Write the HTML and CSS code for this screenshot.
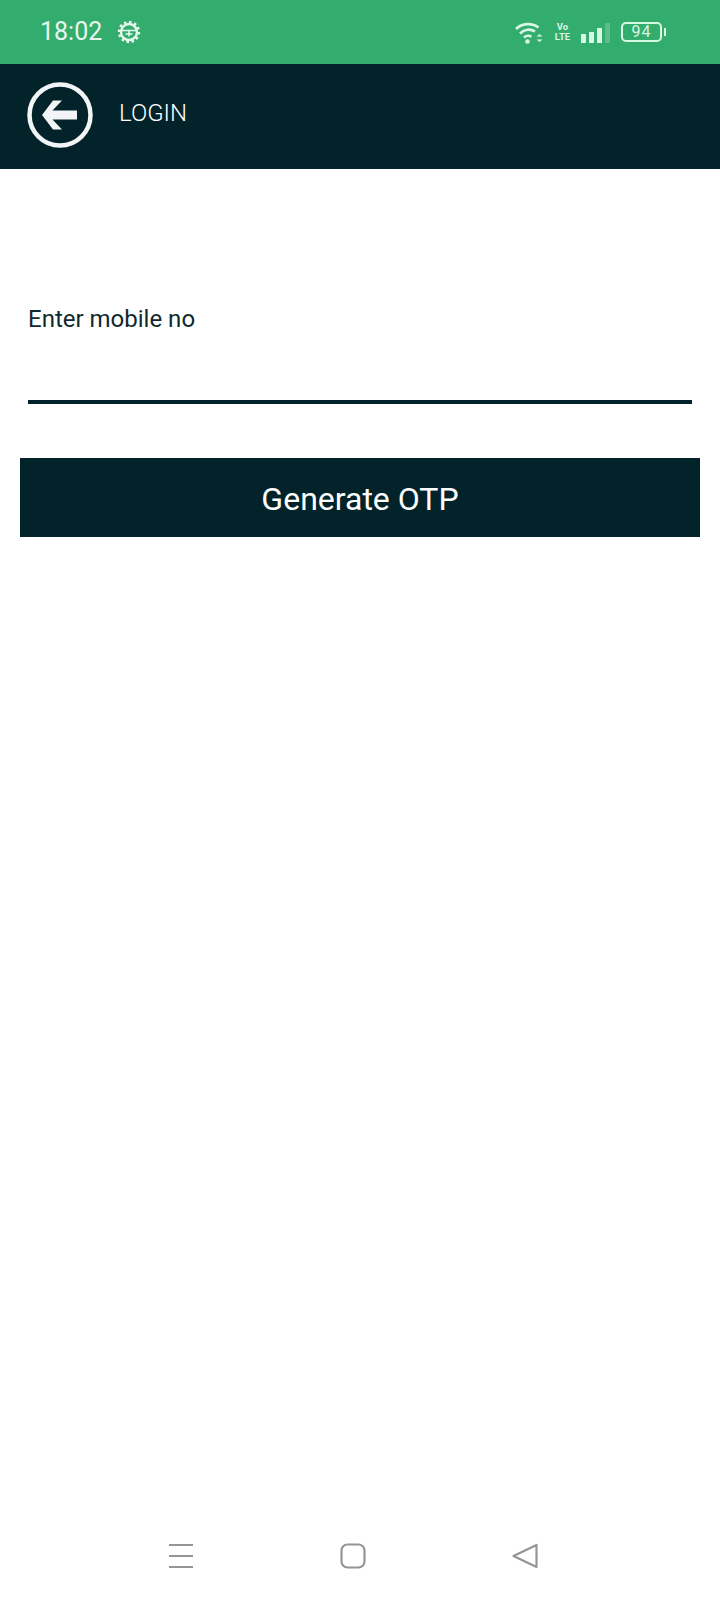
FILE: index.html
```html
<!DOCTYPE html>
<html>

<head>
    <title>Login</title>
    <meta charset="utf-8">
    <meta name="viewport" content="width=device-width, initial-scale=1">
    <link rel="stylesheet" href="styles.css">
</head>

<body>
    <div class="status-bar">
        <span class="status-time">18:02</span>
        <svg class="status-gear" width="24" height="24" viewBox="0 0 24 24" fill="none" stroke="#e8f7ee">
            <circle cx="12" cy="12" r="8" stroke-width="2.4"/>
            <circle cx="12" cy="12" r="10" stroke-width="2.4" stroke-dasharray="2.6 2.6"/>
            <path d="M4.5 10.500h15M12 10.500v6M8.500 14h7" stroke-width="1.6"/>
        </svg>
        <div class="status-right">
            <svg class="status-wifi" width="28" height="22" viewBox="0 0 28 22" fill="none" stroke="#d9f5e4" stroke-width="2.6">
                <path d="M1 7C7 1 17 0.500 23.500 5.500"/>
                <path d="M5 11.500C9.500 7 15.500 6.500 20 9.500"/>
                <path d="M9 15.500C11 13.500 14 13.500 16.500 14.500"/>
                <circle cx="12.500" cy="19.500" r="2.300" fill="#d9f5e4" stroke="none"/>
                <path d="M21.500 14.500h6l-3-2.500zM21.500 17.500h6l-3 2.500z" fill="#d9f5e4" stroke="none"/>
            </svg>
            <div class="status-volte">
                <span>Vo</span>
                <span>LTE</span>
            </div>
            <div class="status-signal">
                <span class="bar bar-1"></span>
                <span class="bar bar-2"></span>
                <span class="bar bar-3"></span>
                <span class="bar bar-4"></span>
            </div>
            <div class="status-battery">
                <span class="battery-body">94</span>
                <span class="battery-cap"></span>
            </div>
        </div>
    </div>

    <div class="app-bar">
        <svg class="back-icon" width="66" height="66" viewBox="0 0 66 66">
            <circle cx="33" cy="33" r="30.500" fill="none" stroke="#f2f4f5" stroke-width="4.500"/>
            <path d="M15 33 L26 18.500 L35 18.500 L25.500 28.500 L50 28.500 L50 37.500 L25.500 37.500 L35 47.500 L26 47.500 Z" fill="#f2f4f5"/>
        </svg>
        <span class="app-title">LOGIN</span>
    </div>

    <div class="content">
        <label class="field-label">Enter mobile no</label>
        <div class="field-line"></div>
        <button class="otp-button">Generate OTP</button>
    </div>

    <div class="nav-bar">
        <svg width="26" height="26" viewBox="0 0 26 26" fill="none" stroke="#959595" stroke-width="2.200">
            <path d="M1 2h24M1 13h24M1 24h24"/>
        </svg>
        <svg width="26" height="26" viewBox="0 0 26 26" fill="none" stroke="#959595" stroke-width="2.200">
            <rect x="1.500" y="1.500" width="23" height="23" rx="6"/>
        </svg>
        <svg width="26" height="26" viewBox="0 0 26 26" fill="none" stroke="#959595" stroke-width="2.200" stroke-linejoin="round">
            <path d="M24.500 2 L24.500 24 L1.500 13 Z"/>
        </svg>
    </div>
</body>

</html>
```

FILE: styles.css
```css
body,
html {
    font-family: Roboto, 'Liberation Sans', sans-serif;
    margin: 0;
    padding: 0;
    background-color: #ffffff;
}

body {
    height: 1600px;
    display: flex;
    flex-direction: column;
}

.status-bar {
    height: 64px;
    background-color: #32ad6e;
    display: flex;
    align-items: center;
    padding: 0 54px 0 40px;
    color: #e8f7ee;
}

.status-time {
    font-size: 25px;
    line-height: 64px;
}

.status-gear {
    margin-left: 15px;
}

.status-right {
    margin-left: auto;
    display: flex;
    align-items: center;
}

.status-wifi {
    margin-top: 2px;
}

.status-volte {
    width: 15px;
    margin-left: 12px;
    display: flex;
    flex-direction: column;
    align-items: center;
    font-size: 8.500px;
    line-height: 10px;
    font-weight: bold;
    color: #d9f5e4;
    transform: scale(1.12, 1.05);
}

.status-signal {
    margin-left: 11px;
    margin-top: 2px;
    display: flex;
    align-items: flex-end;
    gap: 3px;
    height: 20px;
}

.bar {
    width: 5px;
    background-color: #d9f5e4;
}

.bar-1 {
    height: 9px;
}

.bar-2 {
    height: 11px;
}

.bar-3 {
    height: 15px;
}

.bar-4 {
    height: 20px;
    background-color: #5cbd8b;
}

.status-battery {
    margin-left: 11px;
    display: flex;
    align-items: center;
}

.battery-body {
    width: 37px;
    height: 16px;
    border: 2px solid #d9f5e4;
    border-radius: 5px;
    font-size: 16px;
    line-height: 16px;
    letter-spacing: 1px;
    text-align: center;
    color: #d9f5e4;
}

.battery-cap {
    width: 2px;
    height: 8px;
    margin-left: 2px;
    background-color: #d9f5e4;
}

.app-bar {
    height: 101px;
    padding: 0 0 4px 27px;
    background-color: #02232a;
    display: flex;
    align-items: center;
}

.app-title {
    margin-left: 26px;
    margin-bottom: 3px;
    font-size: 24px;
    font-weight: 300;
    color: #ffffff;
}

.content {
    padding: 136px 20px 0;
}

.field-label {
    display: block;
    margin-left: 8px;
    font-size: 24px;
    line-height: 28px;
    color: #10292f;
}

.field-line {
    height: 4px;
    margin: 67px 8px 0;
    background-color: #02232a;
}

.otp-button {
    display: block;
    width: 100%;
    height: 79px;
    margin-top: 54px;
    padding: 2px 0 0;
    border: none;
    background-color: #02232a;
    color: #ffffff;
    font-family: Roboto, 'Liberation Sans', sans-serif;
    font-size: 32px;
}

.nav-bar {
    margin-top: auto;
    margin-bottom: 31px;
    padding: 0 182px 0 168px;
    display: flex;
    justify-content: space-between;
}
```
